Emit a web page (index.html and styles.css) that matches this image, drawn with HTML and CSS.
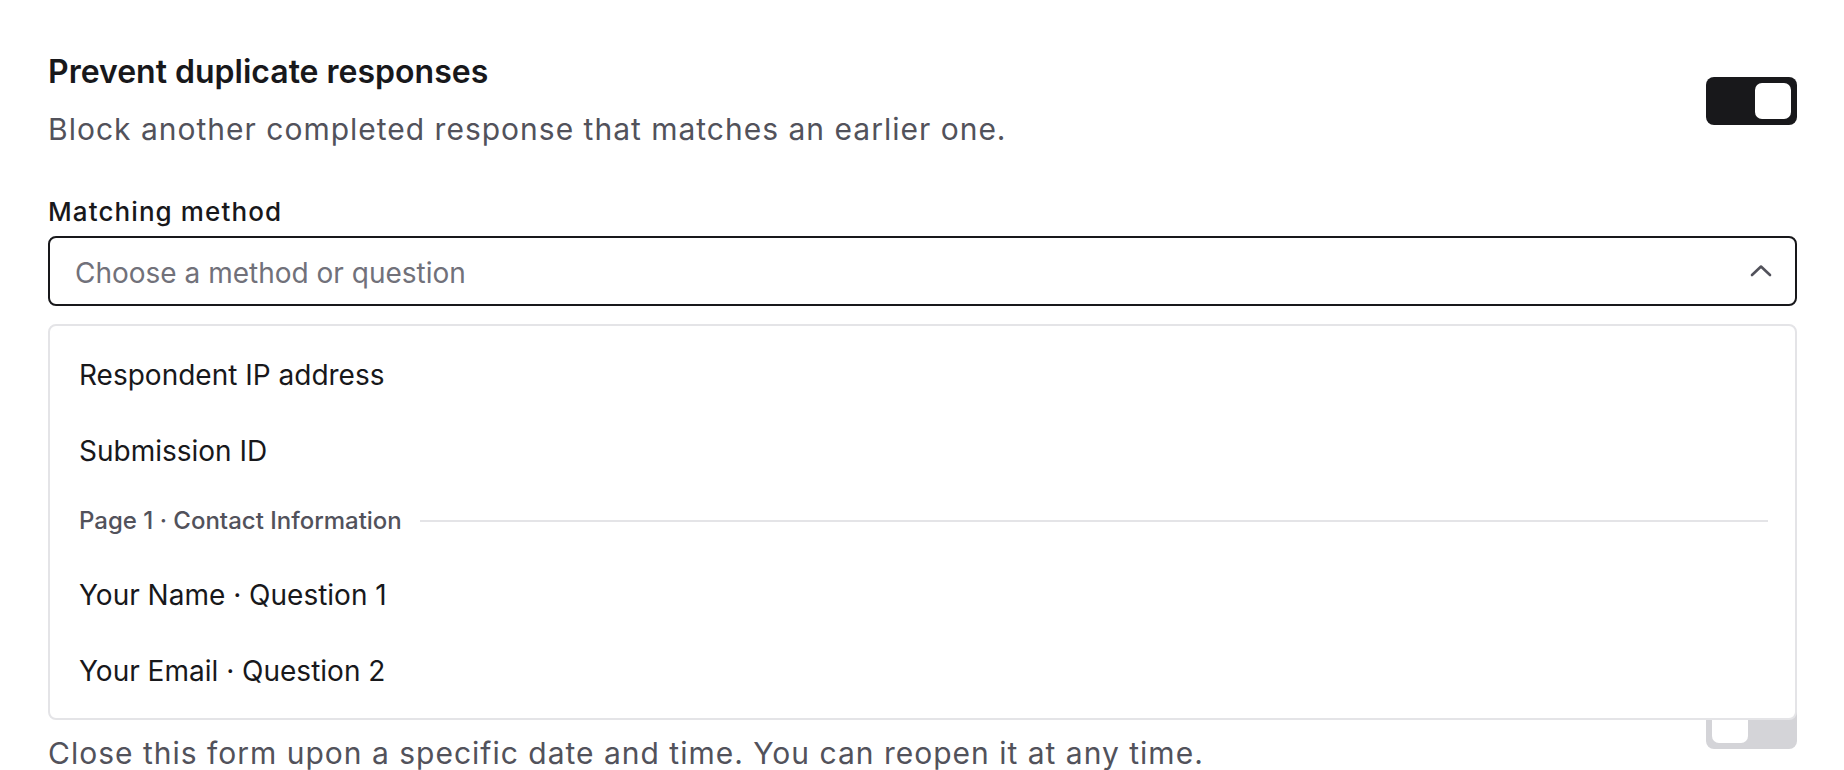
FILE: index.html
```html
<!DOCTYPE html>
<html lang="en">
<head>
<meta charset="utf-8">
<title>Response settings</title>
<link rel="stylesheet" href="styles.css">
</head>
<body>
<main class="page">
  <section class="setting">
    <div class="setting-head">
      <div class="setting-text">
        <h2 class="setting-title">Prevent duplicate responses</h2>
        <p class="setting-desc">Block another completed response that matches an earlier one.</p>
      </div>
      <button class="toggle toggle-on" type="button" aria-pressed="true"><span class="knob"></span></button>
    </div>
    <label class="field-label">Matching method</label>
    <div class="select-wrap">
      <div class="select">
        <span class="placeholder">Choose a method or question</span>
        <svg class="chevron" width="22" height="13" viewBox="0 0 22 13" aria-hidden="true"><path d="M2 11 L11 2.5 L20 11" fill="none" stroke="currentColor" stroke-width="2.6" stroke-linecap="round" stroke-linejoin="round"/></svg>
      </div>
      <ul class="menu">
        <li class="option">Respondent IP address</li>
        <li class="option">Submission ID</li>
        <li class="group"><span class="group-label">Page 1 · Contact Information</span><span class="group-line"></span></li>
        <li class="option">Your Name · Question 1</li>
        <li class="option">Your Email · Question 2</li>
      </ul>
    </div>
  </section>
  <section class="setting setting-next">
    <div class="setting-head">
      <div class="setting-text">
        <h2 class="setting-title">Close form on a date</h2>
        <p class="setting-desc">Close this form upon a specific date and time. You can reopen it at any time.</p>
      </div>
      <button class="toggle toggle-off" type="button" aria-pressed="false"><span class="knob"></span></button>
    </div>
  </section>
</main>
</body>
</html>
```

FILE: styles.css
```css
html, body {
  margin: 0;
  padding: 0;
  overflow: hidden;
  background: #ffffff;
}
body {
  font-family: Inter, "Noto Sans", "Liberation Sans", sans-serif;
  color: #18181b;
}
.page {
  padding: 48px 47px 0 48px;
}
.setting-head {
  display: flex;
  justify-content: space-between;
  align-items: flex-start;
}
.setting-title {
  margin: 0;
  font-size: 32px;
  line-height: 48px;
  font-weight: 600;
  color: #18181b;
}
.setting-desc {
  margin: 13px 0 0;
  font-size: 30px;
  line-height: 40px;
  font-weight: 400;
  letter-spacing: 1px;
  color: #52525b;
}
.toggle {
  margin-top: 29px;
  width: 91px;
  height: 48px;
  border: 0;
  border-radius: 8px;
  padding: 6px;
  display: flex;
  align-items: center;
  cursor: pointer;
}
.toggle .knob {
  width: 36px;
  height: 36px;
  border-radius: 7px;
  background: #ffffff;
}
.toggle-on {
  background: #18181b;
  justify-content: flex-end;
}
.toggle-off {
  background: #d4d4d8;
  justify-content: flex-start;
}
.field-label {
  display: block;
  margin-top: 45px;
  margin-bottom: 6px;
  font-size: 26px;
  line-height: 36px;
  font-weight: 500;
  letter-spacing: 1.1px;
  color: #18181b;
}
.select-wrap {
  position: relative;
}
.select {
  box-sizing: border-box;
  height: 70px;
  border: 2px solid #18181b;
  border-radius: 8px;
  padding: 4px 23px 0 25px;
  display: flex;
  align-items: center;
  justify-content: space-between;
}
.placeholder {
  font-size: 28px;
  line-height: 62px;
  color: #71717a;
}
.chevron {
  color: #52525b;
  margin-top: -6px;
}
.menu {
  position: absolute;
  top: 88px;
  left: 0;
  right: 0;
  z-index: 5;
  margin: 0;
  list-style: none;
  background: #ffffff;
  border: 2px solid #e4e4e7;
  border-radius: 8px;
  padding: 11px 0 9px;
}
.option {
  padding: 18px 29px;
  font-size: 28px;
  line-height: 40px;
  color: #18181b;
}
.group {
  display: flex;
  align-items: center;
  gap: 18px;
  padding: 16px 27px 20px 29px;
}
.group-label {
  font-size: 24px;
  line-height: 32px;
  font-weight: 500;
  color: #52525b;
  white-space: nowrap;
}
.group-line {
  flex: 1;
  height: 2px;
  background: #e4e4e7;
}
.setting-next {
  margin-top: 366px;
}
```
